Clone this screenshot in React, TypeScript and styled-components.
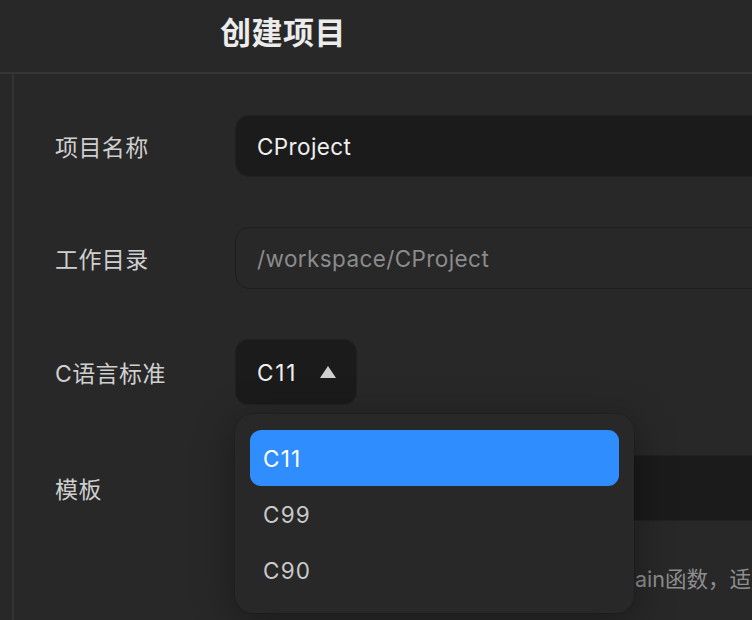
import React from "react";
import styled, { createGlobalStyle } from "styled-components";

const GlobalStyle = createGlobalStyle`
  html, body {
    margin: 0;
    padding: 0;
    background: #282828;
    overflow: hidden;
  }
  body {
    font-family: "Inter", "Noto Sans CJK SC", sans-serif;
    -webkit-font-smoothing: antialiased;
  }
`;

const Dialog = styled.div`
  width: 752px;
  height: 620px;
  overflow: hidden;
  background: #282828;
  display: flex;
  flex-direction: column;
`;

const Header = styled.header`
  height: 74px;
  flex: none;
  display: flex;
  align-items: center;
  padding: 0 0 12px 220px;
  box-sizing: border-box;
  border-bottom: 2px solid #353535;
`;

const Title = styled.h1`
  margin: 0;
  font-family: "Noto Sans CJK SC", sans-serif;
  font-size: 31px;
  font-weight: 700;
  color: #ececec;
  letter-spacing: 0.5px;
`;

const Body = styled.main`
  flex: 1;
  margin-left: 12px;
  border-left: 2px solid #333333;
  padding: 41px 0 0 41px;
`;

const Form = styled.div`
  display: flex;
  flex-direction: column;
  gap: 50px;
`;

const Row = styled.div`
  display: grid;
  grid-template-columns: 180px 1fr;
  align-items: start;
`;

const Label = styled.div<{ $h: number }>`
  height: ${(p) => p.$h}px;
  display: flex;
  align-items: center;
  font-family: "Inter", "Noto Sans CJK SC", sans-serif;
  font-size: 23px;
  color: #cfcfcf;
  letter-spacing: 0.4px;
`;

const TextField = styled.div<{ $disabled?: boolean }>`
  box-sizing: border-box;
  width: 560px;
  height: 62px;
  border-radius: 14px;
  padding: 0 21px;
  display: flex;
  align-items: center;
  font-size: 22.5px;
  letter-spacing: 0.4px;
  background: ${(p) => (p.$disabled ? "#282828" : "#1b1b1b")};
  border: 1px solid ${(p) => (p.$disabled ? "#1e1e1e" : "#212121")};
  color: ${(p) => (p.$disabled ? "#8b8b8b" : "#efefef")};
`;

const Field = styled.div`
  position: relative;
  display: flex;
  flex-direction: column;
`;

const SelectBox = styled.div<{ $wide?: boolean }>`
  box-sizing: border-box;
  width: ${(p) => (p.$wide ? "560px" : "122px")};
  height: 66px;
  border-radius: 13px;
  background: #1b1b1b;
  border: 1px solid #212121;
  display: flex;
  align-items: center;
  gap: 23px;
  padding: 0 21px;
  font-size: 22.5px;
  letter-spacing: 1.8px;
  color: #efefef;
`;

const Caret = styled.svg`
  width: 16px;
  height: 12px;
  flex: none;
`;

const Menu = styled.div`
  position: absolute;
  top: calc(100% + 9px);
  left: 0;
  width: 399px;
  box-sizing: border-box;
  padding: 16px 15px 15px;
  border-radius: 18px;
  background: #282828;
  box-shadow: 0 8px 40px rgba(0, 0, 0, 0.35), 0 0 0 1px rgba(0, 0, 0, 0.08);
  display: flex;
  flex-direction: column;
  z-index: 5;
`;

const Option = styled.div<{ $active?: boolean }>`
  height: 56px;
  border-radius: 11px;
  padding: 0 13px;
  display: flex;
  align-items: center;
  font-size: 22.5px;
  letter-spacing: 1.2px;
  background: ${(p) => (p.$active ? "#2f8dfd" : "transparent")};
  color: ${(p) => (p.$active ? "#ffffff" : "#c9c9c9")};
`;

const Description = styled.p`
  margin: 44px 0 0;
  line-height: 28px;
  white-space: nowrap;
  font-family: "Inter", "Noto Sans CJK SC", sans-serif;
  font-size: 21.5px;
  color: #8e8e8e;
`;

export default function App() {
  return (
    <>
      <GlobalStyle />
      <Dialog>
        <Header>
          <Title>创建项目</Title>
        </Header>
        <Body>
          <Form>
            <Row>
              <Label $h={62}>项目名称</Label>
              <TextField>CProject</TextField>
            </Row>
            <Row>
              <Label $h={62}>工作目录</Label>
              <TextField $disabled>/workspace/CProject</TextField>
            </Row>
            <Row>
              <Label $h={66}>C语言标准</Label>
              <Field>
                <SelectBox>
                  C11
                  <Caret viewBox="0 0 16 12">
                    <polygon points="8,0 16,12 0,12" fill="#cfcfcf" />
                  </Caret>
                </SelectBox>
                <Menu>
                  <Option $active>C11</Option>
                  <Option>C99</Option>
                  <Option>C90</Option>
                </Menu>
              </Field>
            </Row>
            <Row>
              <Label $h={66}>模板</Label>
              <Field>
                <SelectBox $wide>Hello World</SelectBox>
                <Description>简单的C语言控制台程序模板，包含标准main函数，适用于入门学习</Description>
              </Field>
            </Row>
          </Form>
        </Body>
      </Dialog>
    </>
  );
}
